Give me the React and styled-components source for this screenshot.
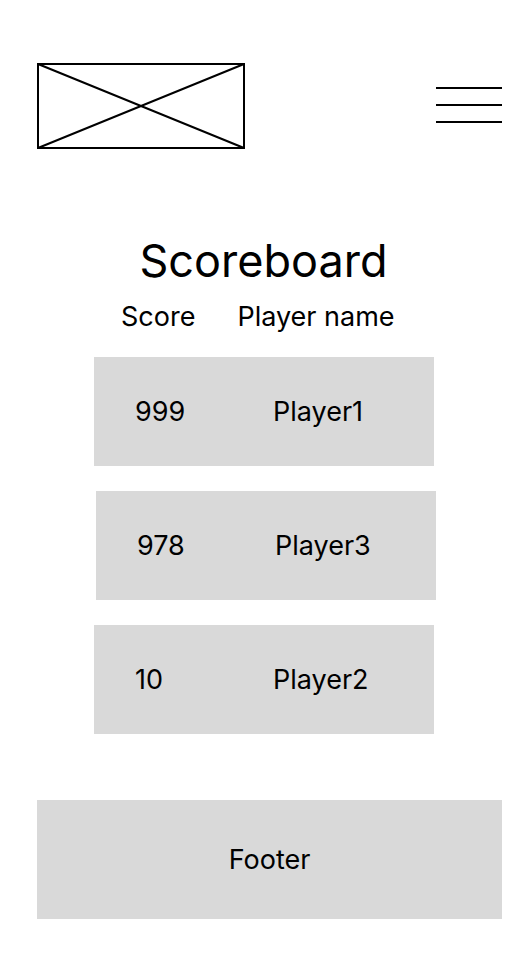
import React from "react";
import styled, { createGlobalStyle } from "styled-components";

const GlobalStyle = createGlobalStyle`
  body {
    margin: 0;
    background: #ffffff;
    font-family: Inter, "Noto Sans", sans-serif;
    color: #000000;
  }
`;

const Page = styled.div`
  width: 532px;
  min-height: 964px;
  box-sizing: border-box;
  padding: 63px 30px 0 37px;
  display: flex;
  flex-direction: column;
`;

const TopBar = styled.header`
  display: flex;
  justify-content: space-between;
  align-items: flex-start;
`;

const MenuButton = styled.button`
  margin-top: 24px;
  width: 66px;
  padding: 0;
  border: 0;
  background: none;
  display: flex;
  flex-direction: column;
  gap: 15px;
`;

const MenuLine = styled.span`
  display: block;
  height: 2px;
  background: #000;
`;

const Title = styled.h1`
  margin: 86px 0 0 -12px;
  font-size: 45px;
  line-height: 52px;
  font-weight: 400;
  text-align: center;
`;

const Columns = styled.div`
  display: flex;
  margin: 14px 0 0 84px;
  font-size: 27px;
  line-height: 32px;
  gap: 42px;
`;

const Rows = styled.div`
  margin-top: 24px;
  display: flex;
  flex-direction: column;
  gap: 25px;
`;

const Row = styled.div`
  margin-left: ${(p) => 57 + p.$shift}px;
  width: 340px;
  height: 109px;
  background: #d9d9d9;
  display: grid;
  grid-template-columns: 138px 1fr;
  align-items: center;
  padding-left: 41px;
  box-sizing: border-box;
  font-size: 27px;
`;

const Footer = styled.footer`
  margin-top: 66px;
  height: 119px;
  background: #d9d9d9;
  display: flex;
  align-items: center;
  justify-content: center;
  font-size: 27px;
`;

const Logo = () => (
  <svg width="208" height="86" viewBox="0 0 208 86">
    <g stroke="#000" strokeWidth="2" fill="none" strokeLinecap="round">
      <rect x="1" y="1" width="206" height="84" />
      <line x1="1" y1="1" x2="207" y2="85" />
      <line x1="1" y1="85" x2="207" y2="1" />
    </g>
  </svg>
);

const scores = [
  { score: 999, name: "Player1", shift: 0 },
  { score: 978, name: "Player3", shift: 2 },
  { score: 10, name: "Player2", shift: 0 },
];

const App = () => {
  return (
    <Page>
      <GlobalStyle />
      <TopBar>
        <Logo />
        <MenuButton aria-label="menu">
          <MenuLine />
          <MenuLine />
          <MenuLine />
        </MenuButton>
      </TopBar>

      <Title>Scoreboard</Title>
      <Columns>
        <span>Score</span>
        <span>Player name</span>
      </Columns>

      <Rows>
        {scores.map((s) => (
          <Row key={s.name} $shift={s.shift}>
            <span>{s.score}</span>
            <span>{s.name}</span>
          </Row>
        ))}
      </Rows>

      <Footer>Footer</Footer>
    </Page>
  );
};

export default App;
